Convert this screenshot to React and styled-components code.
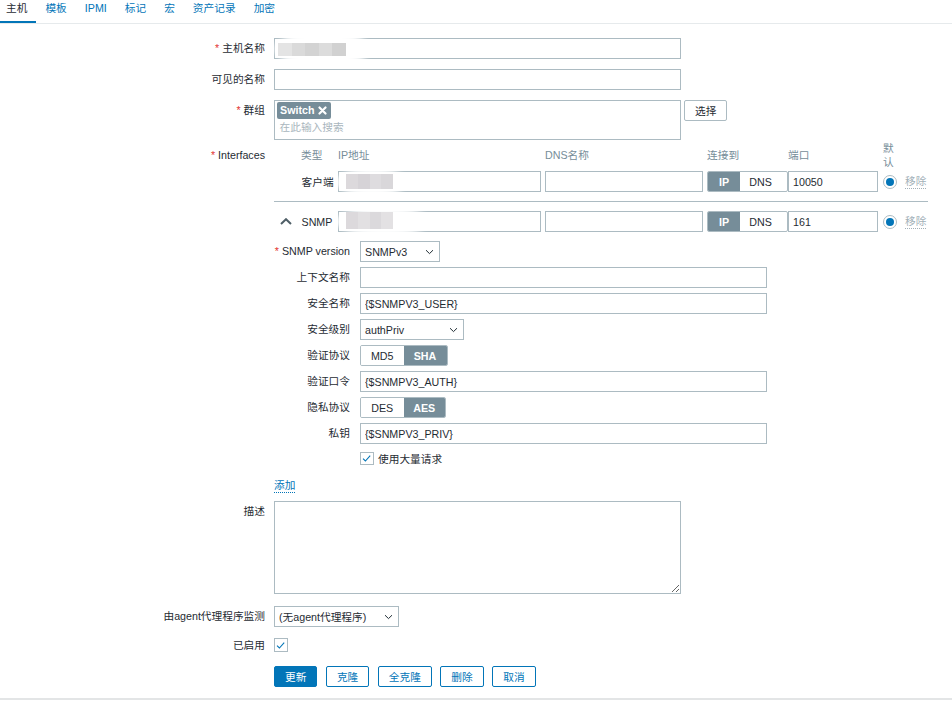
import React from 'react';
import styled, { createGlobalStyle, css } from 'styled-components';

const GlobalStyle = createGlobalStyle`
  html, body { margin: 0; padding: 0; background: #fff; }
  body {
    font-family: "Liberation Sans", Arial, "Noto Sans CJK SC", sans-serif;
    font-size: 10.7px;
    color: #1f2c33;
  }
  * { box-sizing: border-box; }
`;

const Page = styled.div`
  width: 952px;
  height: 702px;
  overflow: hidden;
`;

const TabBar = styled.nav`
  display: flex;
  gap: 3px;
  height: 24px;
  border-bottom: 1px solid #e6eaec;
`;

const Tab = styled.a`
  height: 23px;
  line-height: 17px;
  padding: 0 9px 0 6px;
  color: ${p => (p.$active ? '#1f2c33' : '#0275b8')};
  box-shadow: ${p => (p.$active ? 'inset 0 -2px 0 #0275b8' : 'none')};
  cursor: pointer;
`;

const Form = styled.div`
  padding-bottom: 11px;
  border-bottom: 2px solid #e3e5e6;
`;

const Row = styled.div`
  display: grid;
  grid-template-columns: 265px 1fr;
  column-gap: 9px;
  margin-top: ${p => p.$mt ?? 10}px;
`;

const Label = styled.div`
  text-align: right;
  white-space: nowrap;
  line-height: ${p => p.$lh ?? 21}px;
`;

const Req = styled.span`
  color: #e33734;
`;

const Field = styled.div`
  display: flex;
  align-items: ${p => (p.$center ? 'center' : 'flex-start')};
  height: ${p => (p.$h ? `${p.$h}px` : 'auto')};
`;

const TextInput = styled.input`
  width: ${p => p.$w}px;
  height: 21px;
  border: 1px solid #acbbc2;
  border-radius: 0;
  padding: 0 4px;
  font: inherit;
  color: #1f2c33;
  background: #fff;
  outline: none;
  display: block;
`;

const TextArea = styled.textarea`
  width: 407px;
  height: 93px;
  border: 1px solid #acbbc2;
  border-radius: 0;
  font: inherit;
  outline: none;
  display: block;
  margin: 0;
`;

const Masked = styled.div`
  position: relative;
  display: block;
`;

const Blob = styled.span`
  position: absolute;
  left: ${p => p.$x}px;
  top: ${p => p.$y}px;
  width: ${p => p.$w}px;
  height: ${p => p.$h}px;
  background: #fff;
  border-radius: 45%;
  filter: blur(2px);
`;

const Pixels = styled.span`
  position: absolute;
  left: ${p => p.$x}px;
  top: ${p => p.$y}px;
  height: ${p => p.$h}px;
  display: flex;
  filter: blur(0.7px);
`;

const Pixel = styled.span`
  width: ${p => p.$w}px;
  height: 100%;
  background: ${p => p.$c};
`;

const Multi = styled.div`
  width: 407px;
  height: 39.5px;
  border: 1px solid #acbbc2;
  padding: 0.5px 1.5px;
`;

const Chip = styled.span`
  display: inline-flex;
  align-items: center;
  gap: 4px;
  height: 17px;
  padding: 0 3.5px;
  background: #768d99;
  color: #fff;
  font-weight: bold;
  border-radius: 2px;
`;

const Placeholder = styled.div`
  color: #a9b6bd;
  line-height: 16px;
  padding-left: 3px;
`;

const GreyButton = styled.button`
  height: 21px;
  margin-left: 3px;
  padding: 0 10px;
  border: 1px solid #acbbc2;
  border-radius: 2px;
  background: #fff;
  color: #1f2c33;
  font: inherit;
`;

const ifColumns = css`
  display: grid;
  grid-template-columns: 24px 40px 207px 162px 81px 95px 22px auto;
  align-items: center;
`;

const IfHead = styled.div`
  ${ifColumns};
  height: 28px;
  color: #768d99;
`;

const IfRow = styled.div`
  ${ifColumns};
  height: 21px;
  margin-top: ${p => p.$mt ?? 0}px;
`;

const HeadCell = styled.div`
  padding-left: ${p => p.$pl ?? 0}px;
  width: ${p => (p.$narrow ? '12px' : 'auto')};
  line-height: 14px;
`;

const TypeCell = styled.div`
  padding-left: 3.5px;
  white-space: nowrap;
`;

const ChevCell = styled.div`
  padding-left: 5.5px;
  display: flex;
  align-items: center;
`;

const Divider = styled.div`
  width: 654px;
  height: 1px;
  margin: 9px 0;
  background: #acbbc2;
`;

const Seg = styled.div`
  display: inline-flex;
  height: 21px;
  border: 1px solid #acbbc2;
  border-radius: 2px;
  overflow: hidden;
`;

const SegItem = styled.div`
  width: ${p => p.$w}px;
  display: flex;
  align-items: center;
  justify-content: center;
  background: ${p => (p.$on ? '#768d99' : '#fff')};
  color: ${p => (p.$on ? '#fff' : '#1f2c33')};
  font-weight: ${p => (p.$on ? 'bold' : 'normal')};
`;

const Radio = styled.span`
  width: 14px;
  height: 14px;
  border: 1px solid #acbbc2;
  border-radius: 50%;
  display: flex;
  align-items: center;
  justify-content: center;
  &::after {
    content: '';
    width: 8px;
    height: 8px;
    border-radius: 50%;
    background: #0275b8;
  }
`;

const RemoveLink = styled.span`
  color: #a3b1b9;
  border-bottom: 1px dotted #a3b1b9;
  justify-self: start;
  line-height: 13px;
`;

const Details = styled.div`
  margin-top: 9px;
  display: grid;
  grid-template-columns: 76px auto;
  column-gap: 10px;
  row-gap: 5px;
  align-items: center;
`;

const SubLabel = styled.div`
  text-align: right;
  white-space: nowrap;
  line-height: 21px;
`;

const Select = styled.div`
  width: ${p => p.$w}px;
  height: 21px;
  border: 1px solid #acbbc2;
  background: #fff;
  display: flex;
  align-items: center;
  justify-content: space-between;
  padding: 0 5px 0 4px;
  white-space: nowrap;
`;

const CheckLine = styled.label`
  display: flex;
  align-items: center;
  gap: 4.5px;
  height: 19px;
`;

const CheckBox = styled.span`
  width: 13.5px;
  height: 13.5px;
  border: 1px solid #acbbc2;
  background: #fff;
  display: flex;
  align-items: center;
  justify-content: center;
`;

const AddLink = styled.span`
  color: #0275b8;
  line-height: 13px;
  border-bottom: 1px dotted #0275b8;
`;

const Buttons = styled.div`
  display: flex;
  gap: 8.5px;
`;

const Button = styled.button`
  height: 21px;
  padding: 0 10px;
  border: 1px solid #0275b8;
  border-radius: 2px;
  background: ${p => (p.$primary ? '#0275b8' : '#fff')};
  color: ${p => (p.$primary ? '#fff' : '#0275b8')};
  font: inherit;
  cursor: pointer;
`;

const tabs = ['主机', '模板', 'IPMI', '标记', '宏', '资产记录', '加密'];

const Chevron = () => (
  <svg width="9" height="6" viewBox="0 0 9 6">
    <path d="M1 1.2 L4.5 4.6 L8 1.2" fill="none" stroke="#1f2c33" strokeWidth="1" />
  </svg>
);

const Check = () => (
  <svg width="11" height="11" viewBox="0 0 11 11">
    <path d="M2 5.6 L4.4 8 L9.2 2.6" fill="none" stroke="#0275b8" strokeWidth="1.1" />
  </svg>
);

const Redacted = ({ blob, px }) => (
  <>
    <Blob $x={blob[0]} $y={blob[1]} $w={blob[2]} $h={blob[3]} />
    <Pixels $x={px[0]} $y={px[1]} $h={px[2]}>
      {px[3].map((c, i) => (
        <Pixel key={i} $w={px[4]} $c={c} />
      ))}
    </Pixels>
  </>
);

const SelectBox = ({ w, children }) => (
  <Select $w={w}>
    <span>{children}</span>
    <Chevron />
  </Select>
);

export default function App() {
  return (
    <>
      <GlobalStyle />
      <Page>
        <TabBar>
          {tabs.map((t, i) => (
            <Tab key={t} $active={i === 0}>{t}</Tab>
          ))}
        </TabBar>

        <Form>
          <Row $mt={13.5}>
            <Label><Req>*</Req> 主机名称</Label>
            <Masked>
              <TextInput $w={407} readOnly />
              <Redacted
                blob={[1, -5, 96, 32]}
                px={[4, 5.5, 13, ['#e4e4e4', '#dadada', '#d3d3d3', '#dcdcdc', '#d1d1d1'], 13.6]}
              />
            </Masked>
          </Row>

          <Row>
            <Label>可见的名称</Label>
            <TextInput $w={407} readOnly />
          </Row>

          <Row $mt={10.5}>
            <Label><Req>*</Req> 群组</Label>
            <Field>
              <Multi>
                <Chip>
                  Switch
                  <svg width="9" height="9" viewBox="0 0 9 9">
                    <path d="M1.5 1.5 L7.5 7.5 M7.5 1.5 L1.5 7.5" stroke="#fff" strokeWidth="2.2" strokeLinecap="round" />
                  </svg>
                </Chip>
                <Placeholder>在此输入搜索</Placeholder>
              </Multi>
              <GreyButton>选择</GreyButton>
            </Field>
          </Row>

          <Row $mt={1.5}>
            <Label $lh={28}><Req>*</Req> Interfaces</Label>
            <div>
              <IfHead>
                <span />
                <HeadCell $pl={3}>类型</HeadCell>
                <HeadCell>IP地址</HeadCell>
                <HeadCell>DNS名称</HeadCell>
                <HeadCell>连接到</HeadCell>
                <HeadCell>端口</HeadCell>
                <HeadCell $narrow>默认</HeadCell>
                <span />
              </IfHead>

              <IfRow $mt={2}>
                <span />
                <TypeCell>客户端</TypeCell>
                <Masked>
                  <TextInput $w={203} readOnly />
                  <Redacted
                    blob={[-1, -2, 70, 26]}
                    px={[8, 2.5, 15, ['#dcd9dc', '#d6d3d7', '#dedcdf', '#d9d7da'], 11.8]}
                  />
                </Masked>
                <TextInput $w={158} readOnly />
                <Seg>
                  <SegItem $w={32} $on>IP</SegItem>
                  <SegItem $w={41}>DNS</SegItem>
                </Seg>
                <TextInput $w={90} defaultValue="10050" />
                <Radio />
                <RemoveLink>移除</RemoveLink>
              </IfRow>

              <Divider />

              <IfRow>
                <ChevCell>
                  <svg width="12" height="7" viewBox="0 0 12 7">
                    <path d="M1 6 L6 1.2 L11 6" fill="none" stroke="#4f5f67" strokeWidth="2" />
                  </svg>
                </ChevCell>
                <TypeCell>SNMP</TypeCell>
                <Masked>
                  <TextInput $w={203} readOnly />
                  <Redacted
                    blob={[-1, -3, 92, 27]}
                    px={[8, 1, 17, ['#dcd9dc', '#e2e0e2', '#dbd9dc', '#e3e1e3'], 11.8]}
                  />
                </Masked>
                <TextInput $w={158} readOnly />
                <Seg>
                  <SegItem $w={32} $on>IP</SegItem>
                  <SegItem $w={41}>DNS</SegItem>
                </Seg>
                <TextInput $w={90} defaultValue="161" />
                <Radio />
                <RemoveLink>移除</RemoveLink>
              </IfRow>

              <Details>
                <SubLabel><Req>*</Req> SNMP version</SubLabel>
                <SelectBox w={80}>SNMPv3</SelectBox>

                <SubLabel>上下文名称</SubLabel>
                <TextInput $w={407} readOnly />

                <SubLabel>安全名称</SubLabel>
                <TextInput $w={407} defaultValue="{$SNMPV3_USER}" />

                <SubLabel>安全级别</SubLabel>
                <SelectBox w={104}>authPriv</SelectBox>

                <SubLabel>验证协议</SubLabel>
                <div>
                  <Seg>
                    <SegItem $w={42.5}>MD5</SegItem>
                    <SegItem $w={43} $on>SHA</SegItem>
                  </Seg>
                </div>

                <SubLabel>验证口令</SubLabel>
                <TextInput $w={407} defaultValue="{$SNMPV3_AUTH}" />

                <SubLabel>隐私协议</SubLabel>
                <div>
                  <Seg>
                    <SegItem $w={42.5}>DES</SegItem>
                    <SegItem $w={41.5} $on>AES</SegItem>
                  </Seg>
                </div>

                <SubLabel>私钥</SubLabel>
                <TextInput $w={407} defaultValue="{$SNMPV3_PRIV}" />

                <span />
                <CheckLine>
                  <CheckBox><Check /></CheckBox>
                  使用大量请求
                </CheckLine>
              </Details>
            </div>
          </Row>

          <Row $mt={7}>
            <span />
            <Field $center $h={21}>
              <AddLink>添加</AddLink>
            </Field>
          </Row>

          <Row $mt={5}>
            <Label>描述</Label>
            <TextArea />
          </Row>

          <Row $mt={12}>
            <Label>由agent代理程序监测</Label>
            <SelectBox w={125}>(无agent代理程序)</SelectBox>
          </Row>

          <Row $mt={7.5}>
            <Label>已启用</Label>
            <Field $center $h={21}>
              <CheckBox><Check /></CheckBox>
            </Field>
          </Row>

          <Row $mt={10.5}>
            <span />
            <Buttons>
              <Button $primary>更新</Button>
              <Button>克隆</Button>
              <Button>全克隆</Button>
              <Button>删除</Button>
              <Button>取消</Button>
            </Buttons>
          </Row>
        </Form>
      </Page>
    </>
  );
}
